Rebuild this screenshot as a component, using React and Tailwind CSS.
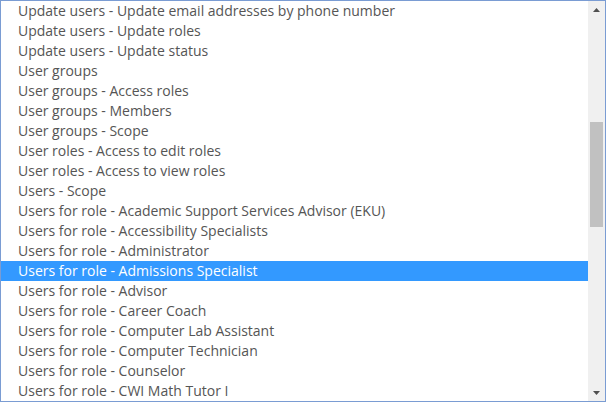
import React from "react";

const items = [
  "Update users - Update email addresses by phone number",
  "Update users - Update roles",
  "Update users - Update status",
  "User groups",
  "User groups - Access roles",
  "User groups - Members",
  "User groups - Scope",
  "User roles - Access to edit roles",
  "User roles - Access to view roles",
  "Users - Scope",
  "Users for role - Academic Support Services Advisor (EKU)",
  "Users for role - Accessibility Specialists",
  "Users for role - Administrator",
  "Users for role - Admissions Specialist",
  "Users for role - Advisor",
  "Users for role - Career Coach",
  "Users for role - Computer Lab Assistant",
  "Users for role - Computer Technician",
  "Users for role - Counselor",
  "Users for role - CWI Math Tutor I",
];

export default function App() {
  return (
    <div className="w-[608px] h-[403px] bg-white">
      <div className="w-[606px] h-[402px] border border-[#7a9cd3] flex bg-white">
        <div className="flex-1 overflow-hidden">
          {items.map((t, i) => (
            <div
              key={i}
              className={
                i === 13
                  ? "h-[20px] leading-[20px] pl-[17px] text-[14px] whitespace-nowrap bg-[#3399ff] text-white"
                  : "h-[20px] leading-[20px] pl-[17px] text-[14px] whitespace-nowrap text-[#555555]"
              }
              style={{ fontFamily: '"Open Sans", sans-serif' }}
            >
              {t}
            </div>
          ))}
        </div>
        <div className="w-[17px] bg-[#f0f0f0] flex flex-col">
          <div className="h-[17px] flex items-center justify-center">
            <svg width="7" height="4" viewBox="0 0 7 4">
              <polygon points="3.5,0 7,4 0,4" fill="#505050" />
            </svg>
          </div>
          <div className="flex-1 px-[2px]">
            <div className="mt-[104px] h-[105px] bg-[#c1c1c1]" />
          </div>
          <div className="h-[17px] flex items-center justify-center">
            <svg width="7" height="4" viewBox="0 0 7 4">
              <polygon points="0,0 7,0 3.5,4" fill="#505050" />
            </svg>
          </div>
        </div>
      </div>
    </div>
  );
}
